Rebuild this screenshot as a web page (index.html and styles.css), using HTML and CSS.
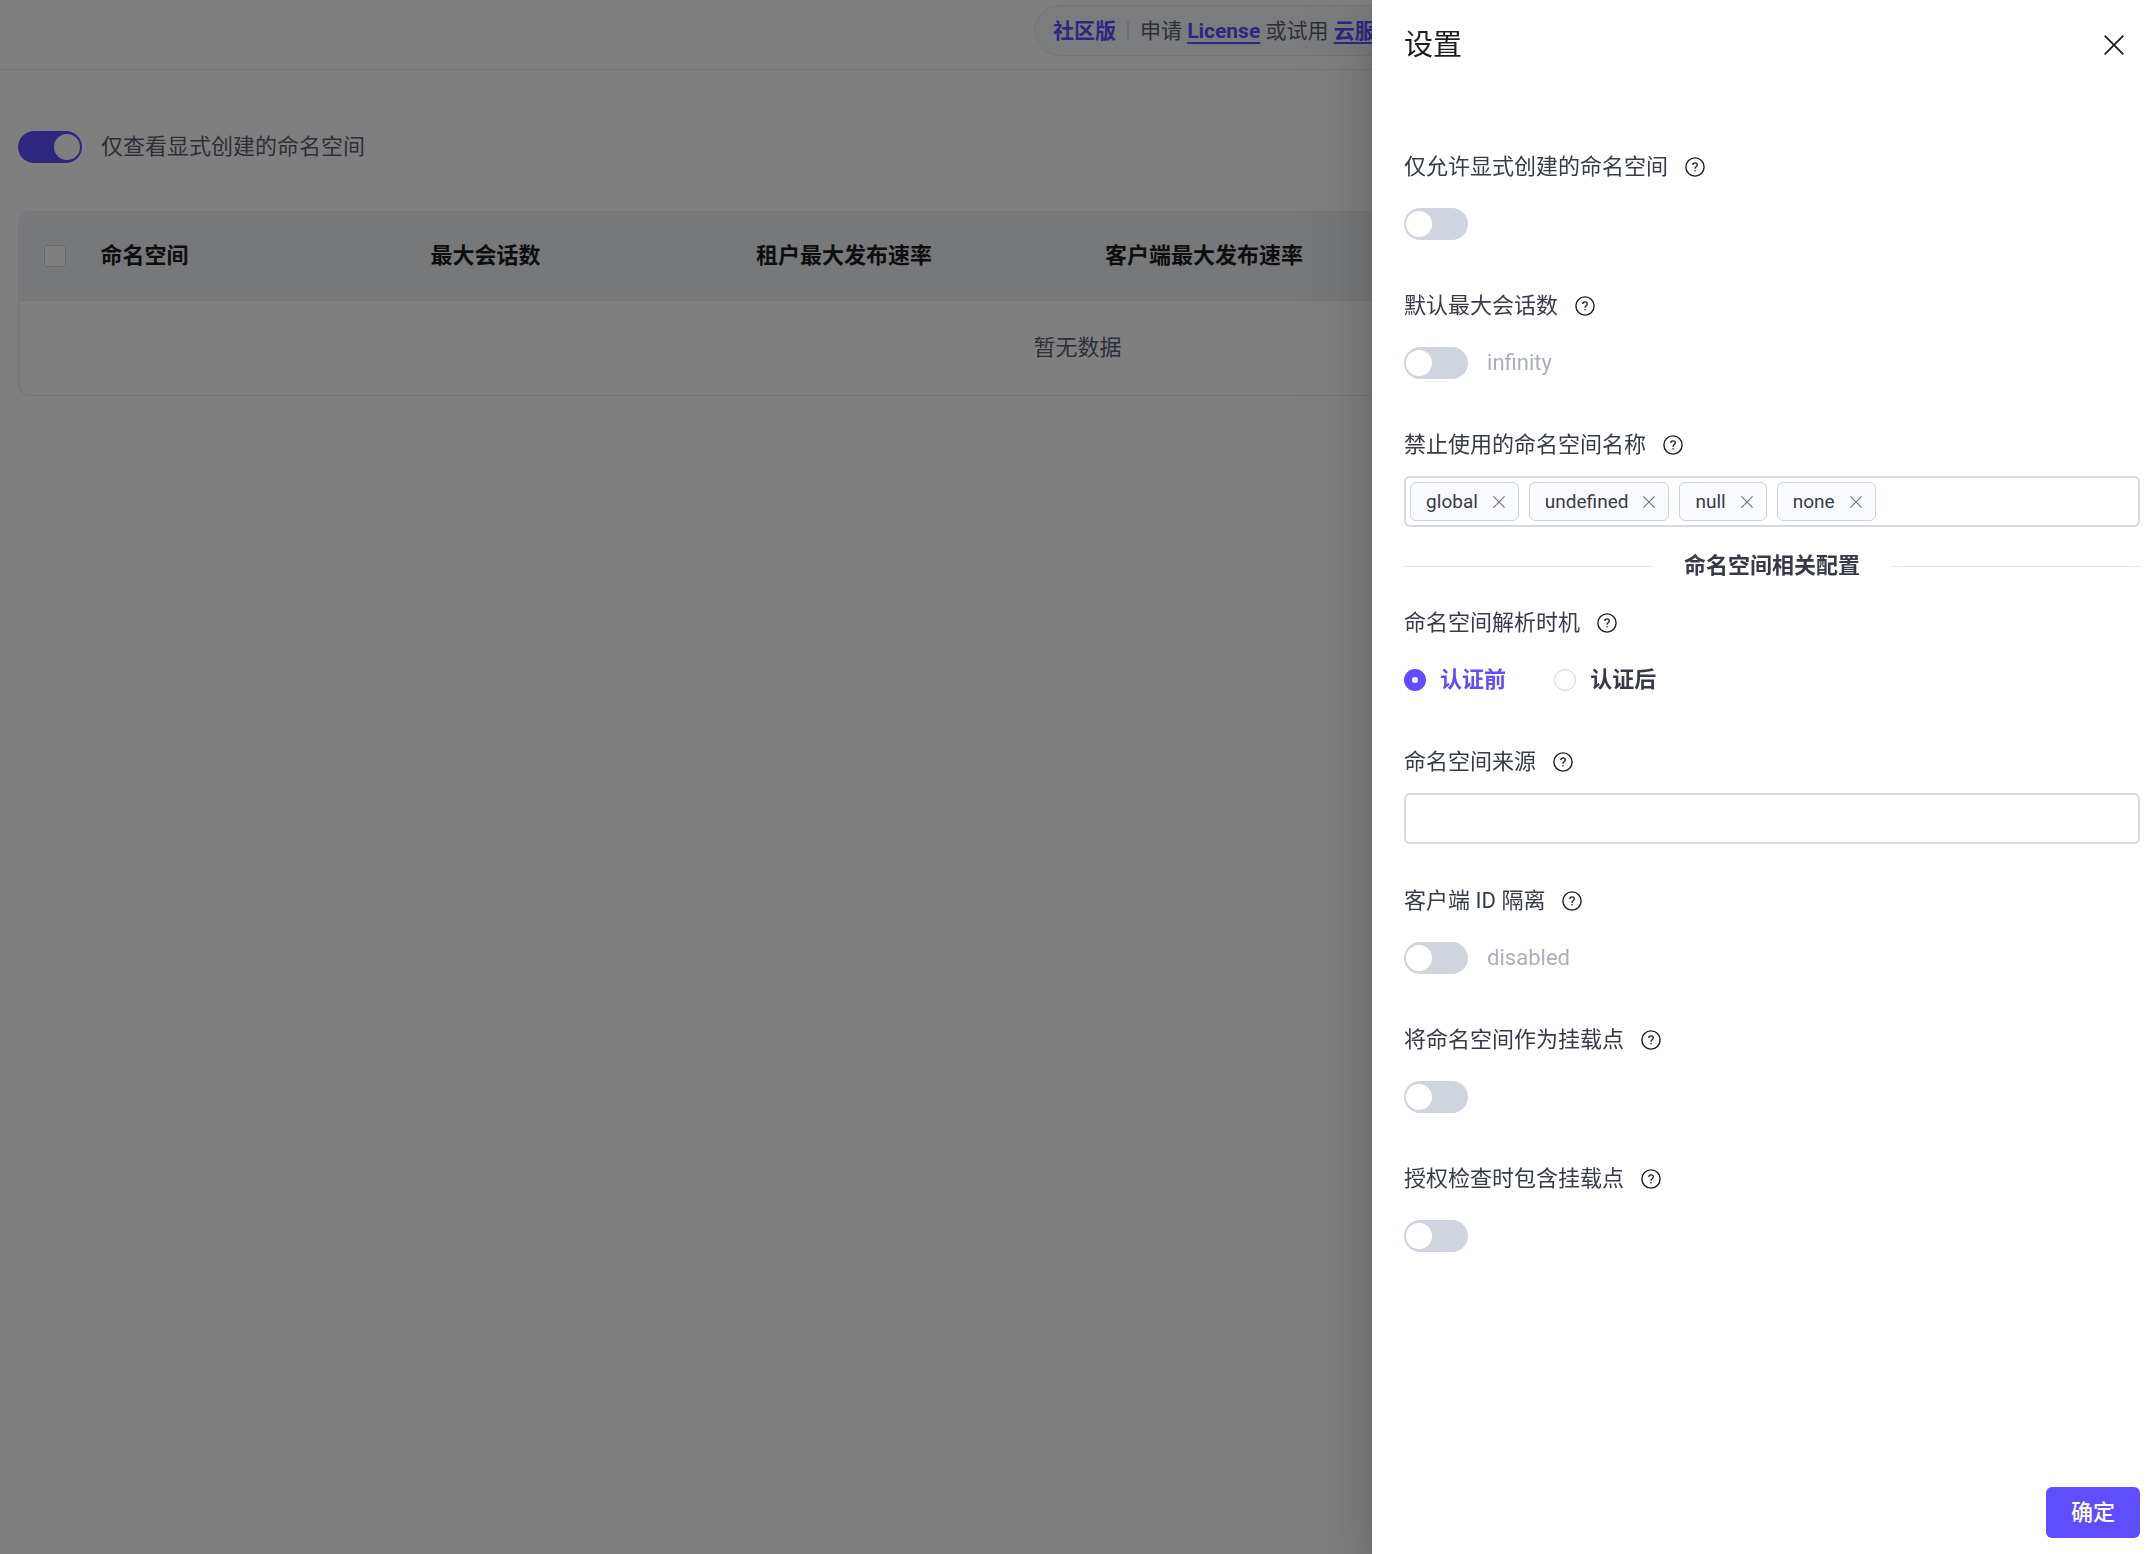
FILE: index.html
```html
<!DOCTYPE html>
<html lang="zh-CN">
<head>
  <meta charset="utf-8">
  <meta name="viewport" content="width=device-width, initial-scale=1">
  <title>命名空间</title>
  <link rel="stylesheet" href="styles.css">
</head>
<body>
  <svg class="sprite" aria-hidden="true">
    <symbol id="icon-help" viewBox="0 0 20 20">
      <circle cx="10" cy="10" r="9.1" fill="none" stroke="currentColor" stroke-width="1.4"/>
      <path d="M7.8 8.1c0-1.4.9-2.3 2.2-2.3s2.3.8 2.3 2c0 1-.6 1.5-1.2 2-.8.6-1.1.9-1.1 1.9" fill="none" stroke="currentColor" stroke-width="1.3"/>
      <circle cx="10" cy="13.7" r=".8" fill="currentColor"/>
    </symbol>
    <symbol id="icon-close" viewBox="0 0 20 20">
      <path d="M.7.7l18.6 18.6M19.3.7L.7 19.3" fill="none" stroke="currentColor" stroke-width="1.8"/>
    </symbol>
  </svg>

  <div class="page">
    <header class="topbar">
      <div class="license">
        <strong class="edition">社区版</strong>
        <span class="bar"></span>
        <span>申请 <a href="#license">License</a> 或试用 <a href="#cloud">云服务</a></span>
      </div>
    </header>
    <main class="content">
      <div class="filter">
        <input class="switch" type="checkbox" role="switch" id="explicit-only" checked>
        <label for="explicit-only">仅查看显式创建的命名空间</label>
      </div>
      <div class="table-wrap">
        <table class="table">
          <colgroup>
            <col class="col-check"><col class="col-name"><col class="col-sessions"><col class="col-tenant"><col>
          </colgroup>
          <thead>
            <tr>
              <th><input class="check" type="checkbox" aria-label="全选"></th>
              <th>命名空间</th>
              <th>最大会话数</th>
              <th>租户最大发布速率</th>
              <th>客户端最大发布速率</th>
            </tr>
          </thead>
          <tbody>
            <tr><td colspan="5">暂无数据</td></tr>
          </tbody>
        </table>
      </div>
    </main>
  </div>

  <div class="overlay">
    <aside class="drawer" role="dialog" aria-labelledby="drawer-title">
      <header class="drawer-head">
        <h2 id="drawer-title">设置</h2>
        <button class="close" type="button" aria-label="关闭"><svg><use href="#icon-close"/></svg></button>
      </header>
      <form class="drawer-body">
        <div class="fields">
          <div class="field">
            <div class="field-label"><label for="explicit">仅允许显式创建的命名空间</label><svg><use href="#icon-help"/></svg></div>
            <div class="control"><input class="switch" type="checkbox" role="switch" id="explicit"></div>
          </div>
          <div class="field">
            <div class="field-label"><label for="sessions">默认最大会话数</label><svg><use href="#icon-help"/></svg></div>
            <div class="control"><input class="switch" type="checkbox" role="switch" id="sessions"><span class="hint">infinity</span></div>
          </div>
          <div class="field">
            <div class="field-label"><label for="banned">禁止使用的命名空间名称</label><svg><use href="#icon-help"/></svg></div>
            <div class="tags">
              <span class="tag">global<button type="button" aria-label="移除 global"><svg><use href="#icon-close"/></svg></button></span>
              <span class="tag">undefined<button type="button" aria-label="移除 undefined"><svg><use href="#icon-close"/></svg></button></span>
              <span class="tag">null<button type="button" aria-label="移除 null"><svg><use href="#icon-close"/></svg></button></span>
              <span class="tag">none<button type="button" aria-label="移除 none"><svg><use href="#icon-close"/></svg></button></span>
              <input type="text" id="banned">
            </div>
          </div>
        </div>

        <h3 class="divider">命名空间相关配置</h3>

        <div class="fields">
          <div class="field" role="radiogroup" aria-labelledby="timing">
            <div class="field-label"><span id="timing">命名空间解析时机</span><svg><use href="#icon-help"/></svg></div>
            <div class="control radios">
              <label><input type="radio" name="timing" checked>认证前</label>
              <label><input type="radio" name="timing">认证后</label>
            </div>
          </div>
          <div class="field">
            <div class="field-label"><label for="source">命名空间来源</label><svg><use href="#icon-help"/></svg></div>
            <input class="text" type="text" id="source">
          </div>
          <div class="field">
            <div class="field-label"><label for="isolation">客户端 ID 隔离</label><svg><use href="#icon-help"/></svg></div>
            <div class="control"><input class="switch" type="checkbox" role="switch" id="isolation"><span class="hint">disabled</span></div>
          </div>
          <div class="field">
            <div class="field-label"><label for="mount">将命名空间作为挂载点</label><svg><use href="#icon-help"/></svg></div>
            <div class="control"><input class="switch" type="checkbox" role="switch" id="mount"></div>
          </div>
          <div class="field">
            <div class="field-label"><label for="authz">授权检查时包含挂载点</label><svg><use href="#icon-help"/></svg></div>
            <div class="control"><input class="switch" type="checkbox" role="switch" id="authz"></div>
          </div>
        </div>
      </form>
      <footer class="drawer-foot">
        <button class="primary" type="button">确定</button>
      </footer>
    </aside>
  </div>
</body>
</html>
```

FILE: styles.css
```css
:root {
  --primary: #5e4eff;
  --border: #d0d3dd;
  --line: #e6e8ed;
  --text: #383a47;
  --text-muted: #5c5f70;
  --hint: #acaeba;
}

* {
  box-sizing: border-box;
}

body {
  margin: 0;
  font-family: Roboto, "Noto Sans CJK SC", sans-serif;
  font-size: 22px;
  line-height: 36px;
  color: var(--text);
  background: #fff;
}

input,
button {
  margin: 0;
  font: inherit;
  color: inherit;
}

button {
  padding: 0;
  border: 0;
  background: none;
  cursor: pointer;
}

.sprite {
  display: none;
}

/* Page behind the drawer */

.page {
  min-height: 100vh;
  overflow: hidden;
}

.topbar {
  display: flex;
  align-items: center;
  height: 70px;
  padding: 0 0 8px 48%;
  border-bottom: 1px solid var(--line);
}

.license {
  display: flex;
  align-items: center;
  gap: 11px;
  height: 51px;
  padding: 0 18px;
  border: 1px solid var(--line);
  border-radius: 26px;
  background: #f7f8fb;
  font-size: 21px;
  white-space: nowrap;
  color: var(--text-muted);
}

.edition,
.license a {
  font-weight: 700;
  color: var(--primary);
}

.license a {
  text-decoration: underline 2px;
  text-underline-offset: 4px;
}

.bar {
  width: 2px;
  height: 18px;
  background: #d5d7de;
}

.content {
  padding: 61px 18px 18px;
}

.filter {
  display: flex;
  align-items: center;
  gap: 19px;
  height: 32px;
  color: var(--text-muted);
}

.table-wrap {
  margin-top: 48px;
  border: 1px solid #e9ebf0;
  border-left: 2px solid #efeef9;
  border-radius: 12px;
  overflow: hidden;
}

.table {
  width: 100%;
  table-layout: fixed;
  border-collapse: collapse;
}

.col-check { width: 3%; }
.col-name { width: 15.6%; }
.col-sessions { width: 15.4%; }
.col-tenant { width: 16.5%; }

.table th {
  height: 88px;
  padding: 0 17px;
  border-bottom: 1px solid var(--line);
  background: #eef0f4;
  font-weight: 700;
  text-align: left;
  color: #1d1d1f;
}

.table th:first-child {
  padding: 0 0 0 24px;
}

.table td {
  height: 95px;
  padding: 0;
  text-align: center;
  color: var(--text-muted);
}

.check {
  display: block;
  width: 22px;
  height: 22px;
  appearance: none;
  border: 1px solid var(--border);
  border-radius: 3px;
  background: #fff;
}

/* Switch */

.switch {
  flex: none;
  display: flex;
  align-items: center;
  width: 64px;
  height: 32px;
  padding: 0 2px;
  appearance: none;
  border-radius: 16px;
  background: #d0d4de;
  cursor: pointer;
}

.switch::before {
  content: "";
  width: 26px;
  height: 26px;
  border-radius: 50%;
  background: #fff;
}

.switch:checked {
  justify-content: flex-end;
  background: var(--primary);
}

/* Drawer */

.overlay {
  position: fixed;
  inset: 0;
  display: flex;
  justify-content: flex-end;
  overflow: hidden;
  background: rgba(0, 0, 0, 0.5);
}

.drawer {
  display: flex;
  flex-direction: column;
  width: 36.3%;
  min-width: 600px;
  background: #fff;
  box-shadow:
    0 26px 76px 26px rgba(0, 0, 0, 0.08),
    0 20px 52px rgba(0, 0, 0, 0.12),
    0 12px 26px -12px rgba(0, 0, 0, 0.16);
}

.drawer-head {
  display: flex;
  align-items: center;
  justify-content: space-between;
  height: 90px;
  padding: 0 30px 0 32px;
  color: #1d1d1f;
}

.drawer-head h2 {
  margin: 0;
  font-size: 29px;
  font-weight: 400;
}

.close,
.close svg {
  display: block;
  width: 20px;
  height: 20px;
}

.drawer-body {
  flex: 1;
  padding: 59px 14px 0 32px;
  overflow: auto;
}

.fields {
  display: flex;
  flex-direction: column;
  gap: 39px;
}

.field {
  display: flex;
  flex-direction: column;
  gap: 13px;
}

.field-label {
  display: flex;
  align-items: center;
  gap: 17px;
}

.field-label svg {
  width: 20px;
  height: 20px;
  color: #1d1d1f;
}

.control {
  display: flex;
  align-items: center;
  gap: 19px;
  height: 51px;
}

.hint {
  color: var(--hint);
}

.text,
.tags {
  height: 51px;
  border: 2px solid #d6d9e2;
  border-radius: 6px;
  background: #fff;
}

.text {
  width: 100%;
  padding: 0 16px;
}

.tags {
  display: flex;
  align-items: center;
  gap: 10px;
  padding: 0 4px;
}

.tags input {
  flex: 1;
  min-width: 0;
  border: 0;
  outline: 0;
  background: none;
}

.tag {
  display: flex;
  align-items: center;
  gap: 15px;
  height: 39px;
  padding: 0 13px 0 15px;
  border: 1px solid var(--border);
  border-radius: 6px;
  background: #f9faff;
  font-size: 19px;
}

.tag button,
.tag svg {
  display: block;
  width: 12px;
  height: 12px;
  color: #6f717c;
}

.divider {
  display: flex;
  align-items: center;
  gap: 32px;
  margin: 21px 0;
  font-size: 22px;
  font-weight: 700;
}

.divider::before,
.divider::after {
  content: "";
  flex: 1;
  height: 1px;
  background: var(--line);
}

.radios {
  gap: 48px;
  font-weight: 700;
}

.radios label {
  display: flex;
  align-items: center;
  gap: 14px;
}

.radios label:has(:checked) {
  color: var(--primary);
}

.radios input {
  width: 22px;
  height: 22px;
  appearance: none;
  border: 1px solid var(--border);
  border-radius: 50%;
  background: #fff;
}

.radios input:checked {
  border: 8px solid var(--primary);
}

.drawer-foot {
  display: flex;
  justify-content: flex-end;
  padding: 16px 14px;
}

.primary {
  height: 51px;
  padding: 0 25px;
  border-radius: 6px;
  font-weight: 500;
  color: #fff;
  background: var(--primary);
}
```
